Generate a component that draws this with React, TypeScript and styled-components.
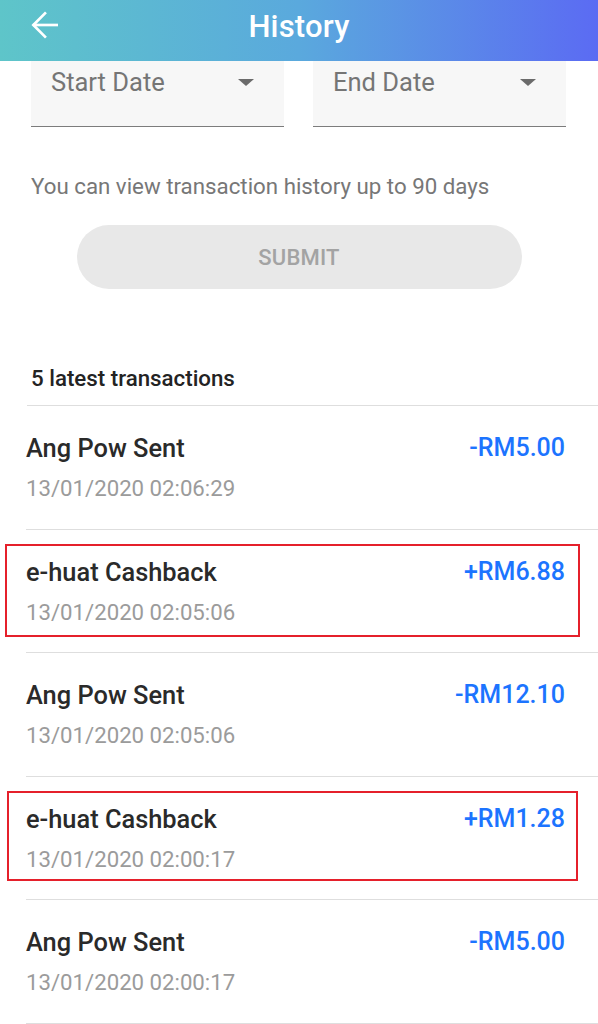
import React from "react";
import styled, { createGlobalStyle } from "styled-components";

const Global = createGlobalStyle`
  html, body { margin: 0; padding: 0; background: #ffffff; }
  body { font-family: Roboto, "Noto Sans", Arial, sans-serif; -webkit-font-smoothing: antialiased; }
  * { box-sizing: border-box; }
`;

const Page = styled.div`
  width: 598px;
  height: 1024px;
  overflow: hidden;
  background: #fff;
  display: flex;
  flex-direction: column;
`;

const Header = styled.header`
  height: 61px;
  flex: none;
  display: grid;
  grid-template-columns: 88px 1fr 88px;
  align-items: start;
  background: linear-gradient(90deg, #5ec5c9 0%, #5aa9dd 50%, #5b6bf3 100%);
  color: #fff;
`;

const BackButton = styled.button`
  border: 0;
  background: transparent;
  color: #fff;
  padding: 5px 0 0 25px;
  display: flex;
  align-items: center;
  cursor: pointer;
`;

const Title = styled.h1`
  margin: 0;
  padding-top: 9px;
  text-align: center;
  font-size: 31px;
  font-weight: 500;
  line-height: 36px;
  letter-spacing: 0.2px;
`;

const Filters = styled.div`
  display: grid;
  grid-template-columns: 1fr 1fr;
  column-gap: 29px;
  padding: 0 32px 0 31px;
`;

const DateField = styled.div`
  height: 66px;
  background: #f7f7f7;
  border-bottom: 1.5px solid #7c7c7c;
  display: flex;
  align-items: flex-start;
  justify-content: space-between;
  padding: 6px 30px 0 20px;
  color: #757575;
  font-size: 25.5px;
  line-height: 30px;
`;

const Caret = styled.span`
  width: 0;
  height: 0;
  margin-top: 12px;
  border-left: 8px solid transparent;
  border-right: 8px solid transparent;
  border-top: 7px solid #6b6b6b;
`;

const Helper = styled.p`
  margin: 46px 0 0 31px;
  font-size: 22.3px;
  line-height: 26px;
  color: #777777;
`;

const SubmitButton = styled.button`
  align-self: center;
  margin-top: 26px;
  width: 445px;
  height: 64px;
  border-radius: 32px;
  border: 0;
  background: #e8e8e8;
  color: #a3a3a3;
  font-family: Roboto, Arial, sans-serif;
  font-size: 22px;
  font-weight: 500;
  letter-spacing: 0.2px;
`;

const SectionTitle = styled.h2`
  margin: 76px 0 0 31px;
  font-size: 22.3px;
  font-weight: 500;
  line-height: 26px;
  color: #232323;
  padding-bottom: 14px;
`;

const List = styled.ul`
  list-style: none;
  margin: 0 0 0 27px;
  padding: 0;
  border-top: 1px solid #dedede;
`;

const Row = styled.li`
  position: relative;
  height: 123.6px;
  border-bottom: 1px solid #dedede;
  padding: 27px 33px 0 0;
  margin-left: -1px;
  display: grid;
  grid-template-columns: 1fr auto;
  grid-template-rows: 30px 26px;
  row-gap: 12px;
`;

const RowTitle = styled.span`
  font-size: 25.4px;
  line-height: 30px;
  font-weight: 500;
  color: #2a2a2a;
`;

const Amount = styled.span`
  font-size: 25px;
  line-height: 30px;
  font-weight: 500;
  color: #1c74ff;
  text-align: right;
`;

const RowDate = styled.span`
  grid-column: 1 / 3;
  font-size: 22.2px;
  line-height: 26px;
  color: #9b9b9b;
`;

const Highlight = styled.span<{ $top: number; $bottom: number; $left: number; $right: number }>`
  position: absolute;
  top: ${(p) => p.$top}px;
  bottom: ${(p) => p.$bottom}px;
  left: ${(p) => p.$left}px;
  right: ${(p) => p.$right}px;
  border: 2px solid #e5202b;
  pointer-events: none;
`;

type Tx = {
  title: string;
  amount: string;
  date: string;
  box?: { top: number; bottom: number; left: number; right: number };
};

const txs: Tx[] = [
  { title: "Ang Pow Sent", amount: "-RM5.00", date: "13/01/2020 02:06:29" },
  {
    title: "e-huat Cashback",
    amount: "+RM6.88",
    date: "13/01/2020 02:05:06",
    box: { top: 14, bottom: 15, left: -21, right: 18 },
  },
  { title: "Ang Pow Sent", amount: "-RM12.10", date: "13/01/2020 02:05:06" },
  {
    title: "e-huat Cashback",
    amount: "+RM1.28",
    date: "13/01/2020 02:00:17",
    box: { top: 14, bottom: 18, left: -19, right: 20 },
  },
  { title: "Ang Pow Sent", amount: "-RM5.00", date: "13/01/2020 02:00:17" },
];

export default function App() {
  return (
    <Page>
      <Global />
      <Header>
        <BackButton aria-label="Back">
          <svg width="40" height="40" viewBox="0 0 24 24" fill="none" stroke="currentColor" strokeWidth="1.6" strokeLinecap="square" strokeLinejoin="miter">
            <path d="M19 12H5.5" />
            <path d="M12 5l-7 7 7 7" />
          </svg>
        </BackButton>
        <Title>History</Title>
        <span />
      </Header>
      <Filters>
        <DateField>
          <span>Start Date</span>
          <Caret />
        </DateField>
        <DateField>
          <span>End Date</span>
          <Caret />
        </DateField>
      </Filters>
      <Helper>You can view transaction history up to 90 days</Helper>
      <SubmitButton>SUBMIT</SubmitButton>
      <SectionTitle>5 latest transactions</SectionTitle>
      <List>
        {txs.map((t, i) => (
          <Row key={i}>
            <RowTitle>{t.title}</RowTitle>
            <Amount>{t.amount}</Amount>
            <RowDate>{t.date}</RowDate>
            {t.box && <Highlight $top={t.box.top} $bottom={t.box.bottom} $left={t.box.left} $right={t.box.right} />}
          </Row>
        ))}
      </List>
    </Page>
  );
}
